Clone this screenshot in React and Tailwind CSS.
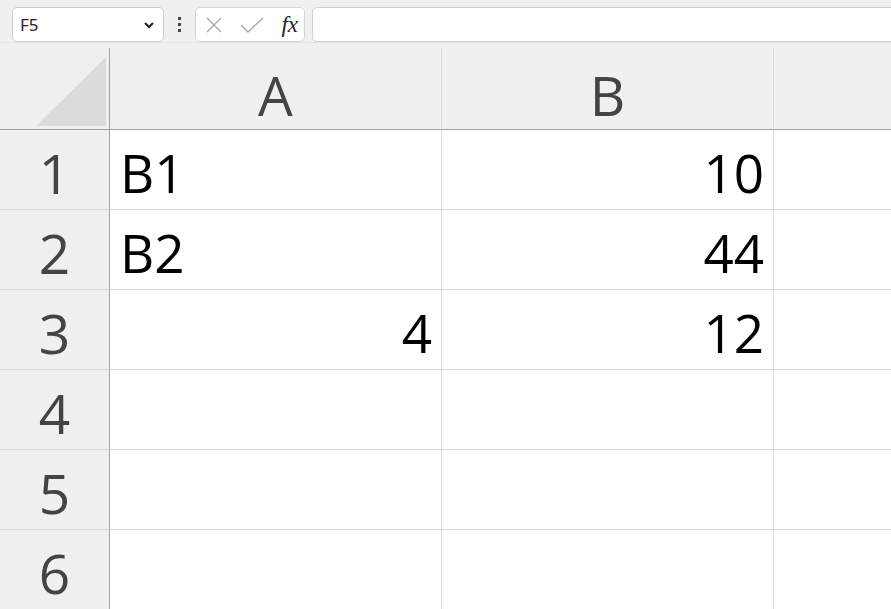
import React from "react";

const cols = ["A", "B"];
const rows = [
  ["B1", "10"],
  ["B2", "44"],
  ["4", "12"],
  ["", ""],
  ["", ""],
  ["", ""],
];

const isNum = (v) => v !== "" && !isNaN(Number(v));

export default function App() {
  return (
    <div className="w-[891px] h-[609px] overflow-hidden bg-[#f0f0f0] font-['Open_Sans',sans-serif]">
      {/* formula bar */}
      <div className="h-[43px] flex items-start pt-[7px] pl-[12px] border-b border-[#e3e3e3]">
        <div className="w-[152px] h-[35px] bg-white border border-[#cfcfcf] rounded-[5px] flex items-center pl-[7px] pr-[8px]">
          <span className="text-[17px] text-[#222] font-['Noto_Sans',sans-serif]">F5</span>
          <svg className="ml-auto" width="12" height="8" viewBox="0 0 12 8">
            <path d="M2 2 L6 6 L10 2" fill="none" stroke="#222" strokeWidth="2" />
          </svg>
        </div>
        <div className="w-[31px] h-[35px] flex flex-col items-center justify-center gap-[3px]">
          <span className="w-[3px] h-[3px] bg-[#444]" />
          <span className="w-[3px] h-[3px] bg-[#444]" />
          <span className="w-[3px] h-[3px] bg-[#444]" />
        </div>
        <div className="w-[110px] h-[35px] bg-white border border-[#d6d6d6] rounded-[5px] flex items-center pl-[8px] pr-[6px]">
          <svg width="20" height="20" viewBox="0 0 20 20">
            <path d="M3 3 L17 17 M17 3 L3 17" stroke="#a8a8a8" strokeWidth="1.4" fill="none" />
          </svg>
          <svg className="ml-[15px]" width="26" height="20" viewBox="0 0 26 20">
            <path d="M2 10 L9 17 L24 3" stroke="#a8a8a8" strokeWidth="1.4" fill="none" />
          </svg>
          <span className="ml-auto text-[23px] italic text-[#222] font-['Liberation_Serif',serif] leading-none">
            fx
          </span>
        </div>
        <div className="ml-[7px] flex-1 -mr-[10px] h-[35px] bg-white border border-[#d0d0d0] rounded-[5px]" />
      </div>

      {/* grid */}
      <div className="mt-[5px] grid grid-cols-[110px_332px_332px_1fr]">
        {/* header row */}
        <div className="relative h-[82px] border-r border-b border-[#a0a0a0]">
          <svg className="absolute left-[36px] top-[9px]" width="70" height="69" viewBox="0 0 70 69">
            <path d="M0 69 L70 69 L70 0 Z" fill="#dcdcdc" />
          </svg>
        </div>
        {cols.map((c) => (
          <div
            key={c}
            className="h-[82px] border-r border-b border-r-[#dcdcdc] border-b-[#a0a0a0] flex items-center justify-center pt-[12px] text-[55px] text-[#444] leading-none"
          >
            {c}
          </div>
        ))}
        <div className="h-[82px] border-b border-[#a0a0a0]" />

        {rows.map((r, i) => (
          <React.Fragment key={i}>
            <div className="h-[80px] border-r border-b border-r-[#a0a0a0] border-b-[#d8d8d8] flex items-center justify-center pt-[6px] text-[55px] text-[#444] leading-none">
              {i + 1}
            </div>
            {r.map((v, j) => (
              <div
                key={j}
                className={`h-[80px] bg-white border-r border-b border-[#dadada] flex items-center pt-[6px] text-[53px] text-black leading-none ${
                  isNum(v) ? "justify-end pr-[9px]" : "justify-start pl-[10px]"
                }`}
              >
                {v}
              </div>
            ))}
            <div className="h-[80px] bg-white border-b border-[#dadada]" />
          </React.Fragment>
        ))}
      </div>
    </div>
  );
}
